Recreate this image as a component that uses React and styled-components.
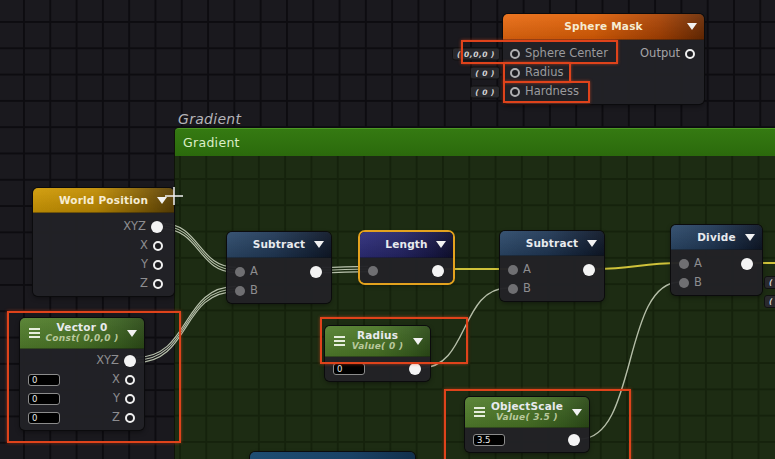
import React from "react";
import styled, { createGlobalStyle, css } from "styled-components";

const GlobalStyle = createGlobalStyle`
  html, body {
    margin: 0;
    padding: 0;
    background: #1a191e;
  }
  body {
    font-family: "DejaVu Sans", "Liberation Sans", sans-serif;
  }
`;

const gridBg = (bg, line, px, py) => css`
  background-color: ${bg};
  background-image: linear-gradient(to right, ${line} 2px, transparent 2px),
    linear-gradient(to bottom, ${line} 2px, transparent 2px);
  background-size: 26.3px 26.3px;
  background-position: ${px}px ${py}px;
`;

const headerBg = {
  orange:
    "linear-gradient(to bottom, rgba(255,255,255,.07), rgba(0,0,0,.12)), linear-gradient(to right, #e96a10 0%, #dd5f06 45%, #a94202 78%, #6a2a02 100%)",
  gold:
    "linear-gradient(to bottom, rgba(255,255,255,.06), rgba(0,0,0,.12)), linear-gradient(to right, #d09a04 0%, #c08c02 45%, #8a6404 75%, #5a4006 100%)",
  green:
    "linear-gradient(to bottom, rgba(255,255,255,.06), rgba(0,0,0,.12)), linear-gradient(to right, #537f2d 0%, #4a7526 50%, #3a6020 80%, #2d4c18 100%)",
  blue:
    "linear-gradient(to bottom, rgba(255,255,255,.05), rgba(0,0,0,.15)), linear-gradient(to right, #2e4b6c 0%, #223a58 45%, #15243a 80%, #0f1828 100%)",
  indigo:
    "linear-gradient(to bottom, rgba(255,255,255,.05), rgba(0,0,0,.15)), linear-gradient(to right, #2f2f7c 0%, #262668 45%, #181848 80%, #101030 100%)",
  teal: "linear-gradient(to right, #1d4d72 0%, #1a4266 60%, #12304c 100%)",
};

const Canvas = styled.div`
  position: relative;
  width: 775px;
  height: 459px;
  overflow: hidden;
  ${gridBg("#1a191e", "#0d0c10", 23, 21)}
`;

const GroupLabel = styled.div`
  position: absolute;
  left: 178px;
  top: 111px;
  font-size: 14px;
  font-style: italic;
  color: #b4b4b8;
  letter-spacing: 0.3px;
`;

const Group = styled.div`
  position: absolute;
  left: 175px;
  top: 128px;
  width: 640px;
  height: 360px;
  border-radius: 4px 0 0 0;
  display: flex;
  flex-direction: column;
  box-shadow: -1px 0 0 #0e1408;
`;

const GroupHeader = styled.div`
  height: 27px;
  flex: none;
  display: flex;
  align-items: center;
  padding-left: 8px;
  background: linear-gradient(to bottom, #357a12, #2b6a0c);
  border-top: 1px solid #4c9a24;
  border-radius: 4px 0 0 0;
  color: #dcefc8;
  font-size: 12.5px;
  letter-spacing: 0.3px;
`;

const GroupBody = styled.div`
  flex: 1;
  ${gridBg("#1d2c13", "#15220c", 4, 22)}
`;

const Wires = styled.svg`
  position: absolute;
  left: 0;
  top: 0;
  width: 775px;
  height: 459px;
  pointer-events: none;
`;

const NodeBox = styled.div`
  position: absolute;
  left: ${(p) => p.$x}px;
  top: ${(p) => p.$y}px;
  width: ${(p) => p.$w}px;
  background: rgba(34, 34, 38, 0.97);
  border-radius: 5px;
  box-shadow: 0 0 0 1px #0b0b0d, 0 2px 5px rgba(0, 0, 0, 0.45);
  ${(p) =>
    p.$selected &&
    css`
      box-shadow: 0 0 0 2px #e3a21e, 0 2px 5px rgba(0, 0, 0, 0.45);
    `}
`;

const Header = styled.div`
  height: ${(p) => p.$h}px;
  display: grid;
  grid-template-columns: 24px 1fr 24px;
  align-items: center;
  background: ${(p) => headerBg[p.$tone]};
  border-radius: 5px 5px 0 0;
  border-bottom: 1px solid rgba(0, 0, 0, 0.45);
  box-sizing: border-box;
`;

const Side = styled.div`
  display: flex;
  justify-content: center;
  align-items: center;
`;

const Titles = styled.div`
  display: flex;
  flex-direction: column;
  align-items: center;
  line-height: 11px;
`;

const Title = styled.div`
  font-size: 10.5px;
  font-weight: bold;
  color: ${(p) => (p.$warm ? "#f6ecd2" : "#e8eaee")};
  white-space: nowrap;
  letter-spacing: 0.2px;
`;

const Sub = styled.div`
  font-size: 9px;
  font-style: italic;
  font-weight: bold;
  color: #b8c89c;
  white-space: nowrap;
  letter-spacing: 0.3px;
`;

const Arrow = styled.div`
  width: 0;
  height: 0;
  border-left: 5px solid transparent;
  border-right: 5px solid transparent;
  border-top: 7px solid #f2f2f2;
`;

const Menu = styled.div`
  display: flex;
  flex-direction: column;
  gap: 2px;
  margin-left: 4px;
  & > i {
    display: block;
    width: 11px;
    height: 2px;
    background: #e6eedc;
  }
`;

const Body = styled.div`
  padding: ${(p) => p.$pt || 3}px 0 3px;
`;

const Row = styled.div`
  position: relative;
  height: ${(p) => p.$h || 19}px;
  display: flex;
  align-items: center;
  justify-content: space-between;
  padding: 0 ${(p) => p.$pr || 9}px 0 ${(p) => p.$pl || 8}px;
`;

const Side2 = styled.div`
  display: flex;
  align-items: center;
  gap: 5px;
`;

const Label = styled.span`
  font-size: 11.5px;
  color: ${(p) => p.$c || "#8d8d90"};
  line-height: 1;
`;

const portStyles = {
  in: css`
    width: 10px;
    height: 10px;
    background: #6f6f72;
  `,
  out: css`
    width: 12px;
    height: 12px;
    background: #f4f4f4;
  `,
  ring: css`
    width: 6px;
    height: 6px;
    border: 2.5px solid #f0f0f0;
    background: #1c1c20;
  `,
  dim: css`
    width: 6px;
    height: 6px;
    border: 2px solid #b0b0b2;
    background: #1c1c20;
  `,
};

const Port = styled.span`
  display: block;
  border-radius: 50%;
  flex: none;
  ${(p) => portStyles[p.$kind]}
`;

const Field = styled.div`
  width: 27px;
  height: 10px;
  background: #000;
  border: 1px solid #8c8c8c;
  border-radius: 3px;
  font-size: 8.5px;
  line-height: 10px;
  padding-left: 3px;
  color: #e8e8e8;
`;

const Tag = styled.div`
  position: absolute;
  right: calc(100% + 3px);
  top: 50%;
  transform: translateY(-50%);
  height: 11px;
  padding: 0 4px;
  border-radius: 3px;
  background: #29292d;
  border: 1px solid #111;
  font-size: 7.5px;
  font-style: italic;
  font-weight: bold;
  line-height: 11px;
  color: #d4d4d4;
  white-space: nowrap;
  letter-spacing: 0.5px;
`;

const LooseTag = styled(Tag)`
  right: auto;
  left: ${(p) => p.$x}px;
  top: ${(p) => p.$y}px;
  transform: none;
  padding-right: 0;
`;

const Mark = styled.div`
  position: absolute;
  left: ${(p) => p.$x}px;
  top: ${(p) => p.$y}px;
  width: ${(p) => p.$w}px;
  height: ${(p) => p.$h}px;
  box-sizing: border-box;
  border: 2px solid #df431b;
  box-shadow: 0 0 3px rgba(230, 70, 30, 0.6);
  pointer-events: none;
`;

function Node({ x, y, w, tone, title, sub, menu, headH = 26, selected, warm, pt, children }) {
  return (
    <NodeBox $x={x} $y={y} $w={w} $selected={selected}>
      <Header $tone={tone} $h={headH}>
        <Side>
          {menu && (
            <Menu>
              <i />
              <i />
              <i />
            </Menu>
          )}
        </Side>
        <Titles>
          <Title $warm={warm}>{title}</Title>
          {sub && <Sub>{sub}</Sub>}
        </Titles>
        <Side>
          <Arrow />
        </Side>
      </Header>
      {children && <Body $pt={pt}>{children}</Body>}
    </NodeBox>
  );
}

const bez = (x1, y1, x2, y2, k) =>
  `M${x1},${y1} C${x1 + k},${y1} ${x2 - k},${y2} ${x2},${y2}`;

const triple = [
  [162, 226, 236, 270, 38],
  [136, 360, 236, 289, 55],
  [322, 270, 368, 269, 20],
];

const single = [
  { d: bez(445, 269, 508, 269, 25), c: "#cfc23a", w: 2 },
  { d: bez(595, 269, 680, 263, 40), c: "#cfc23a", w: 2 },
  { d: bez(753, 263, 780, 263, 10), c: "#cfc23a", w: 2 },
  { d: bez(421, 368, 508, 288, 48), c: "#b5bea8", w: 1.4 },
  { d: bez(580, 439, 680, 282, 58), c: "#b5bea8", w: 1.4 },
];

export default function App() {
  return (
    <>
      <GlobalStyle />
      <Canvas>
        <GroupLabel>Gradient</GroupLabel>
        <Group>
          <GroupHeader>Gradient</GroupHeader>
          <GroupBody />
        </Group>

        <Wires viewBox="0 0 775 459">
          {triple.map(([x1, y1, x2, y2, k], i) =>
            [-2.6, 0, 2.6].map((o) => (
              <path
                key={`${i}${o}`}
                d={bez(x1, y1 + o, x2, y2 + o, k)}
                fill="none"
                stroke="#b9c2ad"
                strokeWidth="1.1"
              />
            ))
          )}
          {single.map((s, i) => (
            <path key={i} d={s.d} fill="none" stroke={s.c} strokeWidth={s.w} />
          ))}
        </Wires>

        <Node x={503} y={14} w={201} tone="orange" title="Sphere Mask" warm pt={4}>
          <Row $pl={7} $pr={9}>
            <Tag>( 0,0,0 )</Tag>
            <Side2>
              <Port $kind="dim" />
              <Label $c="#9a9a9d">Sphere Center</Label>
            </Side2>
            <Side2>
              <Label $c="#a4a4a6">Output</Label>
              <Port $kind="ring" />
            </Side2>
          </Row>
          <Row $pl={7}>
            <Tag>( 0 )</Tag>
            <Side2>
              <Port $kind="dim" />
              <Label $c="#9a9a9d">Radius</Label>
            </Side2>
          </Row>
          <Row $pl={7}>
            <Tag>( 0 )</Tag>
            <Side2>
              <Port $kind="dim" />
              <Label $c="#9a9a9d">Hardness</Label>
            </Side2>
          </Row>
        </Node>

        <Node x={33} y={188} w={141} headH={25} tone="gold" title="World Position" warm pt={4}>
          {[
            ["XYZ", "out"],
            ["X", "ring"],
            ["Y", "ring"],
            ["Z", "ring"],
          ].map(([l, k]) => (
            <Row key={l} $pr={11}>
              <span />
              <Side2>
                <Label>{l}</Label>
                <Port $kind={k} />
              </Side2>
            </Row>
          ))}
        </Node>

        <Node x={20} y={318} w={124} headH={31} tone="green" title="Vector 0" sub="Const( 0,0,0 )" menu pt={2}>
          <Row $pr={8}>
            <span />
            <Side2>
              <Label>XYZ</Label>
              <Port $kind="out" />
            </Side2>
          </Row>
          {["X", "Y", "Z"].map((l) => (
            <Row key={l} $pl={8} $pr={9}>
              <Field>0</Field>
              <Side2>
                <Label>{l}</Label>
                <Port $kind="ring" />
              </Side2>
            </Row>
          ))}
        </Node>

        <Node x={227} y={232} w={104} tone="blue" title="Subtract" pt={4}>
          <Row>
            <Side2>
              <Port $kind="in" />
              <Label>A</Label>
            </Side2>
            <Port $kind="out" />
          </Row>
          <Row>
            <Side2>
              <Port $kind="in" />
              <Label>B</Label>
            </Side2>
          </Row>
        </Node>

        <Node x={360} y={232} w={93} tone="indigo" title="Length" selected>
          <Row $h={19}>
            <Port $kind="in" />
            <Port $kind="out" />
          </Row>
        </Node>

        <Node x={500} y={231} w={104} headH={25} tone="blue" title="Subtract" pt={4}>
          <Row>
            <Side2>
              <Port $kind="in" />
              <Label>A</Label>
            </Side2>
            <Port $kind="out" />
          </Row>
          <Row>
            <Side2>
              <Port $kind="in" />
              <Label>B</Label>
            </Side2>
          </Row>
        </Node>

        <Node x={671} y={225} w={91} headH={25} tone="blue" title="Divide" pt={4}>
          <Row>
            <Side2>
              <Port $kind="in" />
              <Label>A</Label>
            </Side2>
            <Port $kind="out" />
          </Row>
          <Row>
            <Side2>
              <Port $kind="in" />
              <Label>B</Label>
            </Side2>
          </Row>
        </Node>

        <LooseTag $x={764} $y={276}>( 0</LooseTag>
        <LooseTag $x={764} $y={295}>( 1</LooseTag>

        <Node x={325} y={326} w={105} headH={31} tone="green" title="Radius" sub="Value( 0 )" menu>
          <Row $h={18}>
            <Field>0</Field>
            <Port $kind="out" />
          </Row>
        </Node>

        <Node x={465} y={397} w={124} headH={31} tone="green" title="ObjectScale" sub="Value( 3.5 )" menu>
          <Row $h={18}>
            <Field>3.5</Field>
            <Port $kind="out" />
          </Row>
        </Node>

        <NodeBox $x={250} $y={452} $w={165}>
          <Header $tone="teal" $h={20} />
        </NodeBox>

        <Mark $x={461} $y={40} $w={157} $h={24} />
        <Mark $x={503} $y={62} $w={68} $h={21} />
        <Mark $x={503} $y={81} $w={87} $h={22} />
        <Mark $x={7} $y={311} $w={174} $h={132} />
        <Mark $x={320} $y={317} $w={148} $h={47} />
        <Mark $x={444} $y={389} $w={187} $h={80} />

        <Wires viewBox="0 0 775 459">
          <path d="M165,196 H183 M174,187 V205" stroke="#f2f2f2" strokeWidth="1.5" />
        </Wires>
      </Canvas>
    </>
  );
}
